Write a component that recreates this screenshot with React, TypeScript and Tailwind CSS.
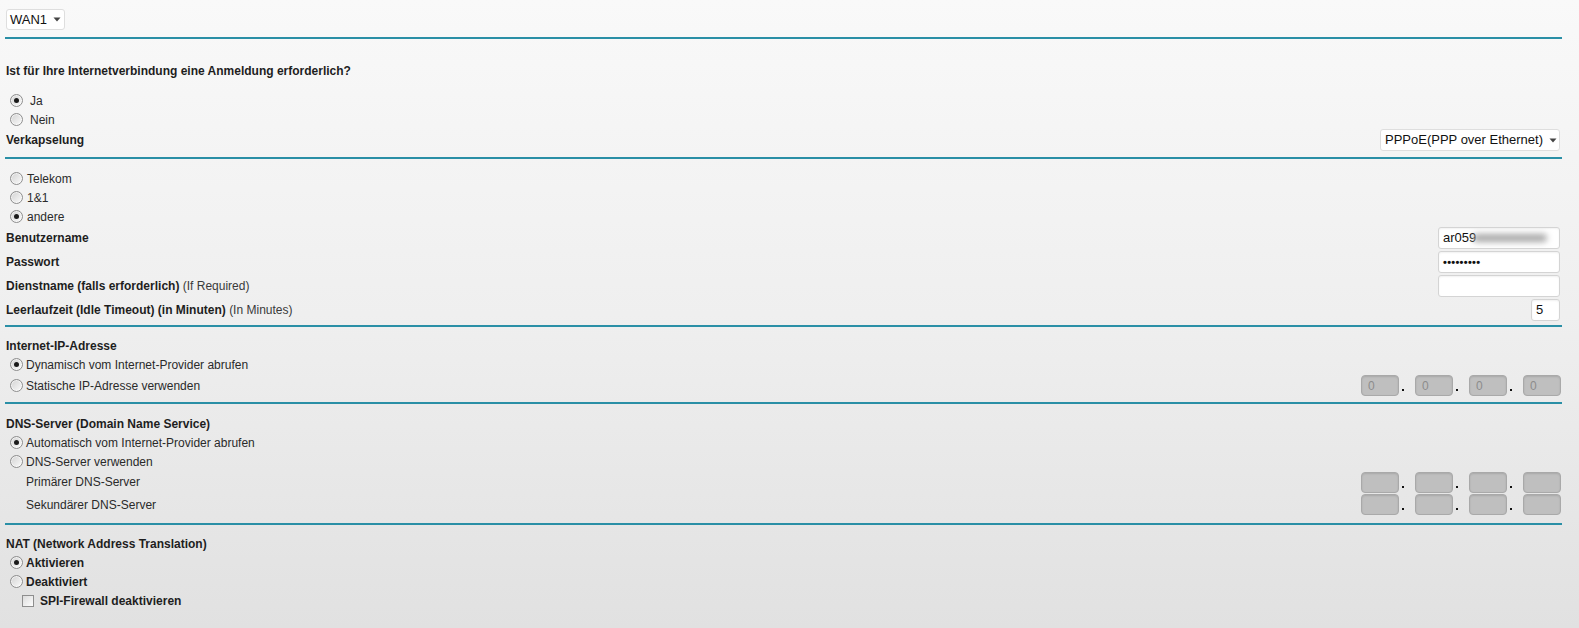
import React from 'react'

function Radio({ checked = false }: { checked?: boolean }) {
  return (
    <span className="inline-flex w-[13px] h-[13px] shrink-0 items-center justify-center rounded-full border border-[#8e8e8e] bg-[linear-gradient(135deg,#d2d2d2,#fbfbfb)] shadow-[inset_0_0_0_1px_rgba(255,255,255,0.6)]">
      {checked && <span className="w-[5px] h-[5px] rounded-full bg-[#1a1a1a]" />}
    </span>
  )
}

function RadioRow({
  checked,
  label,
  bold,
  gap = 'ml-[4px]',
  right,
  h = 'h-[19px]',
}: {
  checked?: boolean
  label: string
  bold?: boolean
  gap?: string
  right?: React.ReactNode
  h?: string
}) {
  return (
    <div className={`flex items-center justify-between ${h}`}>
      <div className="flex items-center pl-[5px]">
        <Radio checked={checked} />
        <span className={`${gap} text-[12px] ${bold ? 'font-bold text-[#1e1e1e]' : 'text-[#2a2a2a]'}`}>
          {label}
        </span>
      </div>
      {right}
    </div>
  )
}

function Divider({ mt }: { mt: string }) {
  return <div className={`${mt} h-[2px] bg-[#2a8fa6]`} />
}

function Heading({ children, mt }: { children: React.ReactNode; mt: string }) {
  return (
    <div className={`${mt} h-[19px] flex items-center pl-[1px] text-[12px] font-bold text-[#1e1e1e]`}>
      {children}
    </div>
  )
}

function Arrow() {
  return (
    <svg width="8" height="5" viewBox="0 0 8 5" className="ml-[6px]">
      <path d="M0.5 0.5 L7.5 0.5 L4 4.5 Z" fill="#444" />
    </svg>
  )
}

function TextBox({ children, w = 'w-[122px]' }: { children?: React.ReactNode; w?: string }) {
  return (
    <div
      className={`${w} h-[22px] flex items-center px-[4px] rounded-[3px] border border-[#d4d4d4] bg-white shadow-[inset_0_1px_2px_rgba(0,0,0,0.06)] text-[13px] text-[#111] overflow-hidden`}
    >
      {children}
    </div>
  )
}

function IpBoxes({ zero }: { zero?: boolean }) {
  return (
    <div className="flex items-center mr-[1px]">
      {[0, 1, 2, 3].map((i) => (
        <div key={i} className="flex items-center">
          <div className="w-[38px] h-[21px] rounded-[4px] border border-[#a9a9a9] bg-[#bfbfbf] shadow-[inset_0_1px_2px_rgba(0,0,0,0.12)] flex items-center pl-[6px] text-[12px] text-[#8c8c8c]">
            {zero ? '0' : ''}
          </div>
          {i < 3 && (
            <div className="w-[16px] h-[21px] flex items-end pb-[5px]">
              <span className="ml-[3px] w-[2px] h-[2px] bg-[#111]" />
            </div>
          )}
        </div>
      ))}
    </div>
  )
}

function FieldRow({ label, note, control }: { label: string; note?: string; control: React.ReactNode }) {
  return (
    <div className="h-[24px] flex items-center justify-between">
      <span className="pl-[1px] text-[12px]">
        <span className="font-bold text-[#1e1e1e]">{label}</span>
        {note && <span className="text-[#3a3a3a]"> {note}</span>}
      </span>
      <div className="mr-[2px]">{control}</div>
    </div>
  )
}

export default function App() {
  return (
    <div className="w-[1579px] h-[628px] overflow-hidden bg-[linear-gradient(180deg,#f9f9f9_0%,#efefef_50%,#e1e1e1_100%)] font-['Liberation_Sans',Arial,sans-serif]">
      <div className="w-[1557px] ml-[5px] pt-[9px]">
        {/* WAN selector */}
        <div className="flex">
          <div className="ml-[1px] h-[21px] w-[59px] flex items-center pl-[3px] rounded-[3px] border border-[#dedede] bg-white text-[13px] text-[#111]">
            WAN1
            <Arrow />
          </div>
        </div>
        <Divider mt="mt-[7px]" />

        {/* Login required */}
        <Heading mt="mt-[22px]">Ist für Ihre Internetverbindung eine Anmeldung erforderlich?</Heading>
        <div className="mt-[11px]">
          <RadioRow checked label="Ja" gap="ml-[7px]" />
          <RadioRow label="Nein" gap="ml-[7px]" />
        </div>
        <div className="h-[22px] flex items-center justify-between">
          <span className="pl-[1px] text-[12px] font-bold text-[#1e1e1e]">Verkapselung</span>
          <div className="mr-[2px] h-[22px] w-[180px] flex items-center pl-[4px] rounded-[3px] border border-[#dedede] bg-white text-[13px] text-[#111]">
            PPPoE(PPP over Ethernet)
            <Arrow />
          </div>
        </div>
        <Divider mt="mt-[6px]" />

        {/* Provider / account */}
        <div className="mt-[10px]">
          <RadioRow label="Telekom" />
          <RadioRow label="1&1" />
          <RadioRow checked label="andere" />
        </div>
        <FieldRow
          label="Benutzername"
          control={
            <TextBox>
              <span>ar059</span>
              <span className="ml-[-3px] inline-block w-[74px] h-[8px] rounded-full bg-[#a8a8a8] blur-[3px]" />
            </TextBox>
          }
        />
        <FieldRow
          label="Passwort"
          control={
            <TextBox>
              <span className="text-[11px] font-bold tracking-[0.3px] text-[#111]">•••••••••</span>
            </TextBox>
          }
        />
        <FieldRow label="Dienstname (falls erforderlich)" note="(If Required)" control={<TextBox />} />
        <FieldRow
          label="Leerlaufzeit (Idle Timeout) (in Minuten)"
          note="(In Minutes)"
          control={
            <TextBox w="w-[29px]">
              <span>5</span>
            </TextBox>
          }
        />
        <Divider mt="mt-[3px]" />

        {/* Internet IP */}
        <Heading mt="mt-[9px]">Internet-IP-Adresse</Heading>
        <RadioRow checked label="Dynamisch vom Internet-Provider abrufen" gap="ml-[3px]" />
        <RadioRow label="Statische IP-Adresse verwenden" gap="ml-[3px]" h="h-[23px]" right={<IpBoxes zero />} />
        <Divider mt="mt-[5px]" />

        {/* DNS */}
        <Heading mt="mt-[10px]">DNS-Server (Domain Name Service)</Heading>
        <RadioRow checked label="Automatisch vom Internet-Provider abrufen" gap="ml-[3px]" />
        <RadioRow label="DNS-Server verwenden" gap="ml-[3px]" />
        <div className="h-[22px] flex items-center justify-between">
          <span className="pl-[21px] text-[12px] text-[#2a2a2a]">Primärer DNS-Server</span>
          <IpBoxes />
        </div>
        <div className="h-[23px] flex items-center justify-between">
          <span className="pl-[21px] text-[12px] text-[#2a2a2a]">Sekundärer DNS-Server</span>
          <IpBoxes />
        </div>
        <Divider mt="mt-[7px]" />

        {/* NAT */}
        <Heading mt="mt-[9px]">NAT (Network Address Translation)</Heading>
        <RadioRow checked bold label="Aktivieren" gap="ml-[3px]" />
        <RadioRow bold label="Deaktiviert" gap="ml-[3px]" />
        <div className="h-[19px] flex items-center pl-[17px]">
          <span className="w-[12px] h-[12px] border border-[#8e8e8e] bg-[linear-gradient(135deg,#dcdcdc,#fdfdfd)]" />
          <span className="ml-[6px] text-[12px] font-bold text-[#1e1e1e]">SPI-Firewall deaktivieren</span>
        </div>
      </div>
    </div>
  )
}
